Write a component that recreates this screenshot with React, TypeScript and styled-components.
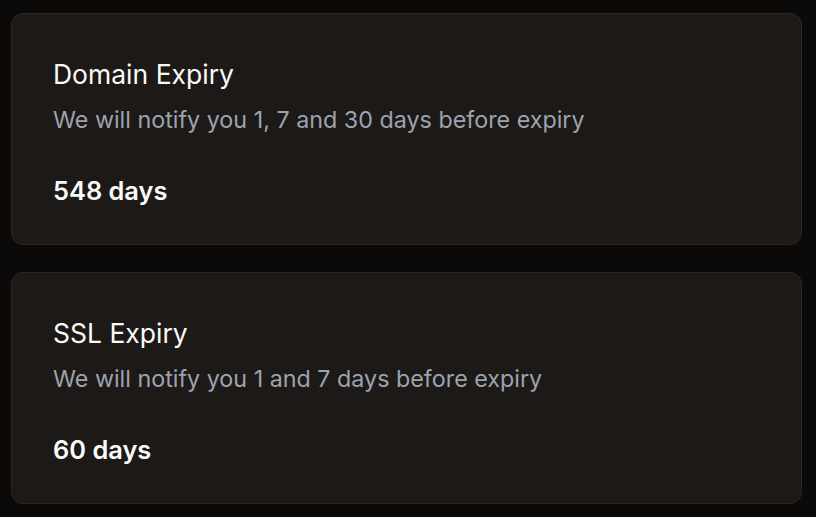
import React from "react";
import styled, { createGlobalStyle } from "styled-components";

const Global = createGlobalStyle`
  html, body { margin: 0; padding: 0; background: #0c0a09; }
  body { font-family: Inter, "Noto Sans", sans-serif; }
`;

const Page = styled.div`
  display: flex;
  flex-direction: column;
  gap: 27px;
  padding: 13px 14px 13px 11px;
  min-height: 517px;
  box-sizing: border-box;
`;

const Card = styled.section`
  box-sizing: border-box;
  height: 232px;
  background: #1c1917;
  border: 1px solid #2a2725;
  border-radius: 12px;
  padding: 44px 41px 0 41px;
  display: flex;
  flex-direction: column;
`;

const Title = styled.h2`
  margin: 0;
  font-size: 26.5px;
  line-height: 32px;
  font-weight: 400;
  color: #fafaf9;
`;

const Desc = styled.p`
  margin: 16px 0 0;
  font-size: 23.3px;
  line-height: 28px;
  color: #9ca3af;
`;

const Value = styled.div`
  margin-top: 41px;
  font-size: 25.4px;
  line-height: 32px;
  font-weight: 600;
  color: #fafaf9;
`;

const items = [
  { title: "Domain Expiry", desc: "We will notify you 1, 7 and 30 days before expiry", value: "548 days" },
  { title: "SSL Expiry", desc: "We will notify you 1 and 7 days before expiry", value: "60 days" },
];

export default function App() {
  return (
    <>
      <Global />
      <Page>
        {items.map((it) => (
          <Card key={it.title}>
            <Title>{it.title}</Title>
            <Desc>{it.desc}</Desc>
            <Value>{it.value}</Value>
          </Card>
        ))}
      </Page>
    </>
  );
}
